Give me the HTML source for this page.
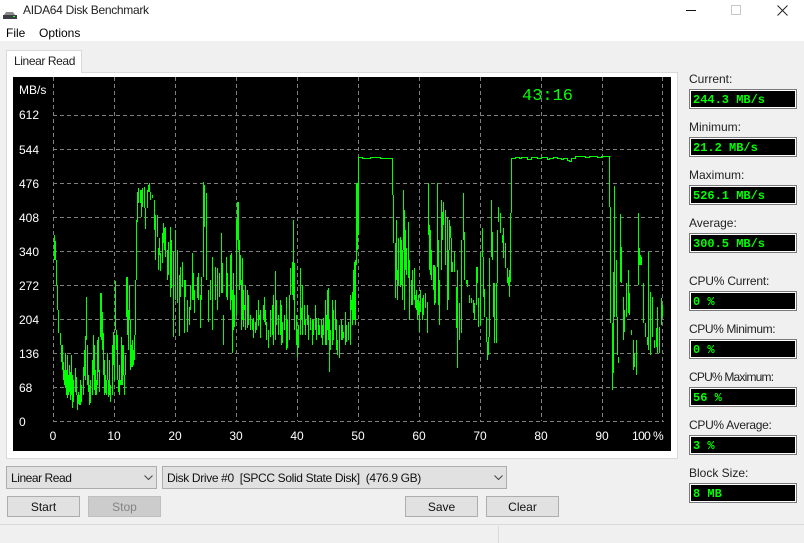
<!DOCTYPE html>
<html><head><meta charset="utf-8"><style>
html,body{margin:0;padding:0;width:804px;height:543px;overflow:hidden;background:#f0f0f0;font-family:"Liberation Sans",sans-serif;font-size:12px;color:#000}
.a{position:absolute}
.t{position:absolute;white-space:nowrap;line-height:14px;height:14px}
.w{color:#fff}
.c{transform:translateX(-50%)}
.l{color:#222;left:689px}
.b{position:absolute;left:689px;width:104px;height:16px;border:1px solid #7a7a7a;outline:1px solid #fff;outline-offset:-2px;background:#000;box-sizing:content-box;color:#0f0;font:bold 12px/18px "Liberation Mono",monospace;text-indent:2px;padding:1px 1px}
.btn{position:absolute;top:496px;width:71px;height:19px;border:1px solid #adadad;background:#e1e1e1;text-align:center;line-height:20px;color:#111}
.cb{position:absolute;top:466px;height:21px;border:1px solid #adadad;background:#e1e1e1;line-height:23px;text-indent:4px;color:#111;box-sizing:content-box}
</style></head><body>
<div class="a" style="left:0;top:0;width:804px;height:41px;background:#fff"></div>
<svg class="a" style="left:2px;top:8px" width="16" height="11"><path d="M4 4h7l2 3H2z" fill="#8a8a8a"/><rect x="1" y="7" width="14" height="4" fill="#3a3f44"/><rect x="11" y="8" width="2" height="1" fill="#3f3"/></svg>
<div class="t" style="left:23px;top:3px;letter-spacing:-.3px;color:#222">AIDA64 Disk Benchmark</div>
<div class="t" style="left:6px;top:26px">File</div>
<div class="t" style="left:39px;top:26px">Options</div>
<svg class="a" style="left:680px;top:0" width="124" height="20" fill="none" shape-rendering="crispEdges"><path d="M6 10.5h10" stroke="#111"/><rect x="51.5" y="5.5" width="9" height="9" stroke="#c8c8c8"/><path d="M97.5 5.5l10 10M107.5 5.5l-10 10" stroke="#222" shape-rendering="auto"/></svg>

<div class="a" style="left:6px;top:50px;width:76px;height:23px;background:#fff;border:1px solid #d9d9d9;border-bottom:0;box-sizing:border-box;z-index:2"></div>
<div class="a" style="left:6px;top:72px;width:672px;height:387px;background:#fff;border:1px solid #d9d9d9;box-sizing:border-box"></div>
<div class="t" style="left:14px;top:54px;z-index:3;color:#222;letter-spacing:-.4px">Linear Read</div>
<div class="a" style="left:13px;top:77px;width:658px;height:374px;background:#000"></div>

<svg class="a" style="left:0;top:0" width="804" height="543" fill="none" shape-rendering="crispEdges">
<g stroke="#808080" stroke-dasharray="4 3">
<path d="M53.5 77V421M114.5 77V421M175.5 77V421M236.5 77V421M297.5 77V421M358.5 77V421M419.5 77V421M480.5 77V421M541.5 77V421M602.5 77V421M662.5 77V421"/>
<path d="M53 115.5H664M53 149.5H664M53 183.5H664M53 217.5H664M53 251.5H664M53 285.5H664M53 319.5H664M53 353.5H664M53 387.5H664M53 421.5H664"/>
</g>
<g transform="translate(.5,0)" stroke="#00ff00">
<path d="M54 235V260M55 241V260M56 260V285M57 285V310M58 310V333M60 333V345M61 345V362M62 345V370M63 362V380M64 370V385M65 353V388M66 370V395M67 355V398M68 375V395M69 365V392M70 372V400M71 355V395M72 375V408M73 380V402M75 368V392M76 377V395M77 395V410M78 392V404M79 395V405M80 380V405M81 385V402M83 367V395M84 350V376M85 336V380M86 297V340M87 345V385M88 375V392M89 385V405M90 380V403M92 360V395M93 335V375M94 345V390M95 370V395M96 380V395M97 340V385M98 337V372M99 370V392M100 293V337M101 293V340M102 312V350M103 333V375M104 360V395M105 375V393M106 380V395M107 353V380M108 380V397M109 360V395M110 385V402M112 345V395M113 332V365M114 335V380M115 281V330M116 330V350M117 335V380M118 380V392M119 365V395M120 380V385M121 337V385M122 345V385M123 345V375M124 375V395M125 355V375M126 277V317M127 277V335M128 310V350M129 285V320M130 320V370M131 345V367M132 340V367M133 350V365M134 335V360M135 280V335M136 220V280M137 192V222"/>
<path d="M138 188V203M140 190V203M141 190V217M142 188V207M144 187V208M145 208V229M147 190V208M148 185V192M149 183V192M150 192V200M152 195V198M154 200V230M155 215V260M157 215V237M158 248V270M159 238V255M160 253V271M162 233V263M163 223V243M164 228V250M165 227V257M167 250V280M168 242V275M170 227V297M171 240V288M173 252V337M175 230V300M177 250V303M179 275V336M180 267V297M182 262V287M184 280V333M185 280V297M187 300V332M189 307V325M190 285V310M192 253V300M193 273V300M194 290V313M197 277V298M198 273V300M200 295V328M201 277V300M203 182V277M204 185V227M206 193V280M208 290V322M210 280V300M212 257V330M215 267V300M217 268V310M219 273V297M221 233V293M222 263V293M223 315V345M226 257V297M227 273V300M230 255V310M231 253V300M232 290V353M233 273V330M234 295V327M236 220V315M237 202V240M238 202V250M239 240V290M240 255V285M241 280V330M242 258V320M243 290V327M244 305V310M245 285V330M247 290V328M248 295V325M250 315V330M252 320V330M253 318V338M255 322V333M256 310V330M258 300V326M259 315V320M260 310V338M263 305V320M264 297V322M265 310V325M266 322V340M268 330V348M270 310V337M272 305V335M273 295V345M275 271V340M276 300V325M278 315V335M280 300V335M281 305V345M282 322V343M284 315V330M286 297V350M287 320V348M289 295V340M290 268V295M292 262V295M293 220V300M294 263V330M296 315V345M297 330V357M298 325V348M300 268V335M301 308V320M302 285V335M304 305V325M305 320V335M307 305V325M308 315V340M310 318V330M312 320V345M313 320V335M315 305V330M316 318V340M318 318V335M319 325V335M321 320V338M322 325V345M323 318V335M325 300V345M326 315V345M327 290V330M328 288V340M329 320V372M330 330V350M332 300V345M333 310V340M335 300V330M336 320V350M337 340V355M339 325V358M341 320V340M342 325V340M343 332V338M345 312V345M346 325V342M348 322V340M350 295V345M351 300V310M352 292V325M353 270V320M354 262V320M355 260V325M356 183V265M357 183V250M358 157V235"/>
<path d="M358 157.5H362V158.5H370V157.5H380V158.5H392"/>
<path d="M392 158V195M393 195V243M395 243V298M396 220V280M397 270V300M398 238V285M400 237V287M401 240V285M402 250V300M403 190V250M404 210V310M405 230V270M406 248V275M408 222V278M409 260V320M411 280V305M412 270V305M414 268V300M415 295V308M416 290V310M417 300V320M418 295V315M419 303V332M420 290V312M422 298V320M423 295V315M425 293V308M427 302V333M428 183V235M429 225V270M430 230V275M431 250V280M433 265V290M434 265V305M435 267V303M437 183V267M438 240V305M439 280V325M441 200V270M442 212V240M443 202V225M445 210V265M447 217V310M448 250V300M449 220V250M450 226V238M451 238V272M452 262V272M454 252V272M456 287V328M457 270V368M459 303V340M461 240V333M463 193V240M464 232V280M466 280V284M467 280V287M469 295V303M471 298V303M473 300V313M474 303V320M476 267V305M477 267V283M478 298V327M480 252V325M482 228V257M483 257V297M484 289V317M486 317V342M487 342V360M488 337V355M489 258V337M491 200V257M492 232V260M493 283V317M494 283V343M496 283V343M497 230V283M498 207V222M500 213V233M502 235V243M503 228V258M505 243V268M507 268V283M508 277V285M509 270V297M510 213V282M511 158V213"/>
<path d="M511 158.5h4V157.5h4V158.5h2V157.5h6V159.5h4V157.5h6V158.5h4V157.5h6V159.5h2V158.5h4V157.5h4V158.5h4V159.5h2V158.5h4V160.5h2V161.5h2V158.5h4V156.5h10V157.5h4V156.5h8V157.5h4V156.5H610"/>
<path d="M609 156V207M610 207V323M612 323V390M613 272V373M614 186V317M616 260V317M617 317V355M618 357V363M620 214V282M621 247V283M623 297V340M624 310V332M626 283V317M628 270V313M629 293V315M631 330V335M633 340V370M634 353V367M636 340V375M638 213V285M639 248V265M640 255V265M641 257V265M643 283V323M645 323V337M647 337V345M648 252V350M650 292V355M652 297V337M654 340V348M656 328V347M657 307V353M659 327V353M661 298V325M662 305V317"/>
</g>
</svg>

<div class="t w" style="left:19px;top:83px">MB/s</div>
<div class="t w" style="left:19px;top:108px">612</div>
<div class="t w" style="left:19px;top:143px">544</div>
<div class="t w" style="left:19px;top:177px">476</div>
<div class="t w" style="left:19px;top:211px">408</div>
<div class="t w" style="left:19px;top:245px">340</div>
<div class="t w" style="left:19px;top:279px">272</div>
<div class="t w" style="left:19px;top:313px">204</div>
<div class="t w" style="left:19px;top:347px">136</div>
<div class="t w" style="left:19px;top:381px">68</div>
<div class="t w" style="left:19px;top:415px">0</div>
<div class="t w c" style="left:53px;top:429px">0</div>
<div class="t w c" style="left:114px;top:429px">10</div>
<div class="t w c" style="left:175px;top:429px">20</div>
<div class="t w c" style="left:236px;top:429px">30</div>
<div class="t w c" style="left:297px;top:429px">40</div>
<div class="t w c" style="left:358px;top:429px">50</div>
<div class="t w c" style="left:419px;top:429px">60</div>
<div class="t w c" style="left:480px;top:429px">70</div>
<div class="t w c" style="left:541px;top:429px">80</div>
<div class="t w c" style="left:602px;top:429px">90</div>
<div class="t w" style="left:632px;top:429px;letter-spacing:-.6px">100 %</div>
<div class="t" style="left:522px;top:87px;height:20px;line-height:20px;font-family:'Liberation Mono',monospace;font-size:17px;color:#0f0">43:16</div>

<div class="cb" style="left:6px;width:149px;letter-spacing:-.45px">Linear Read</div>
<div class="cb" style="left:162px;width:343px;letter-spacing:-.35px">Disk Drive #0&nbsp; [SPCC Solid State Disk]&nbsp; (476.9 GB)</div>
<svg class="a" style="left:0;top:470px" width="510" height="16" fill="none" stroke="#444"><path d="M144.5 5.5l4 4 4-4M494.5 5.5l4 4 4-4"/></svg>
<div class="btn" style="left:7px">Start</div>
<div class="btn" style="left:88px;background:#ccc;border-color:#bfbfbf;color:#838383">Stop</div>
<div class="btn" style="left:405px">Save</div>
<div class="btn" style="left:486px">Clear</div>

<div class="t l" style="top:72px">Current:</div><div class="b" style="top:89px">244.3 MB/s</div>
<div class="t l" style="top:120px">Minimum:</div><div class="b" style="top:137px">21.2 MB/s</div>
<div class="t l" style="top:168px">Maximum:</div><div class="b" style="top:185px">526.1 MB/s</div>
<div class="t l" style="top:216px">Average:</div><div class="b" style="top:233px">300.5 MB/s</div>
<div class="t l" style="top:274px;letter-spacing:-.2px">CPU% Current:</div><div class="b" style="top:291px">0 %</div>
<div class="t l" style="top:322px;letter-spacing:-.4px">CPU% Minimum:</div><div class="b" style="top:339px">0 %</div>
<div class="t l" style="top:370px;letter-spacing:-.8px">CPU% Maximum:</div><div class="b" style="top:387px">56 %</div>
<div class="t l" style="top:418px;letter-spacing:-.3px">CPU% Average:</div><div class="b" style="top:435px">3 %</div>
<div class="t l" style="top:466px">Block Size:</div><div class="b" style="top:483px">8 MB</div>

<div class="a" style="left:0;top:524px;width:804px;height:1px;background:#d9d9d9"></div>
<div class="a" style="left:498px;top:526px;width:1px;height:17px;background:#d9d9d9"></div>
</body></html>
